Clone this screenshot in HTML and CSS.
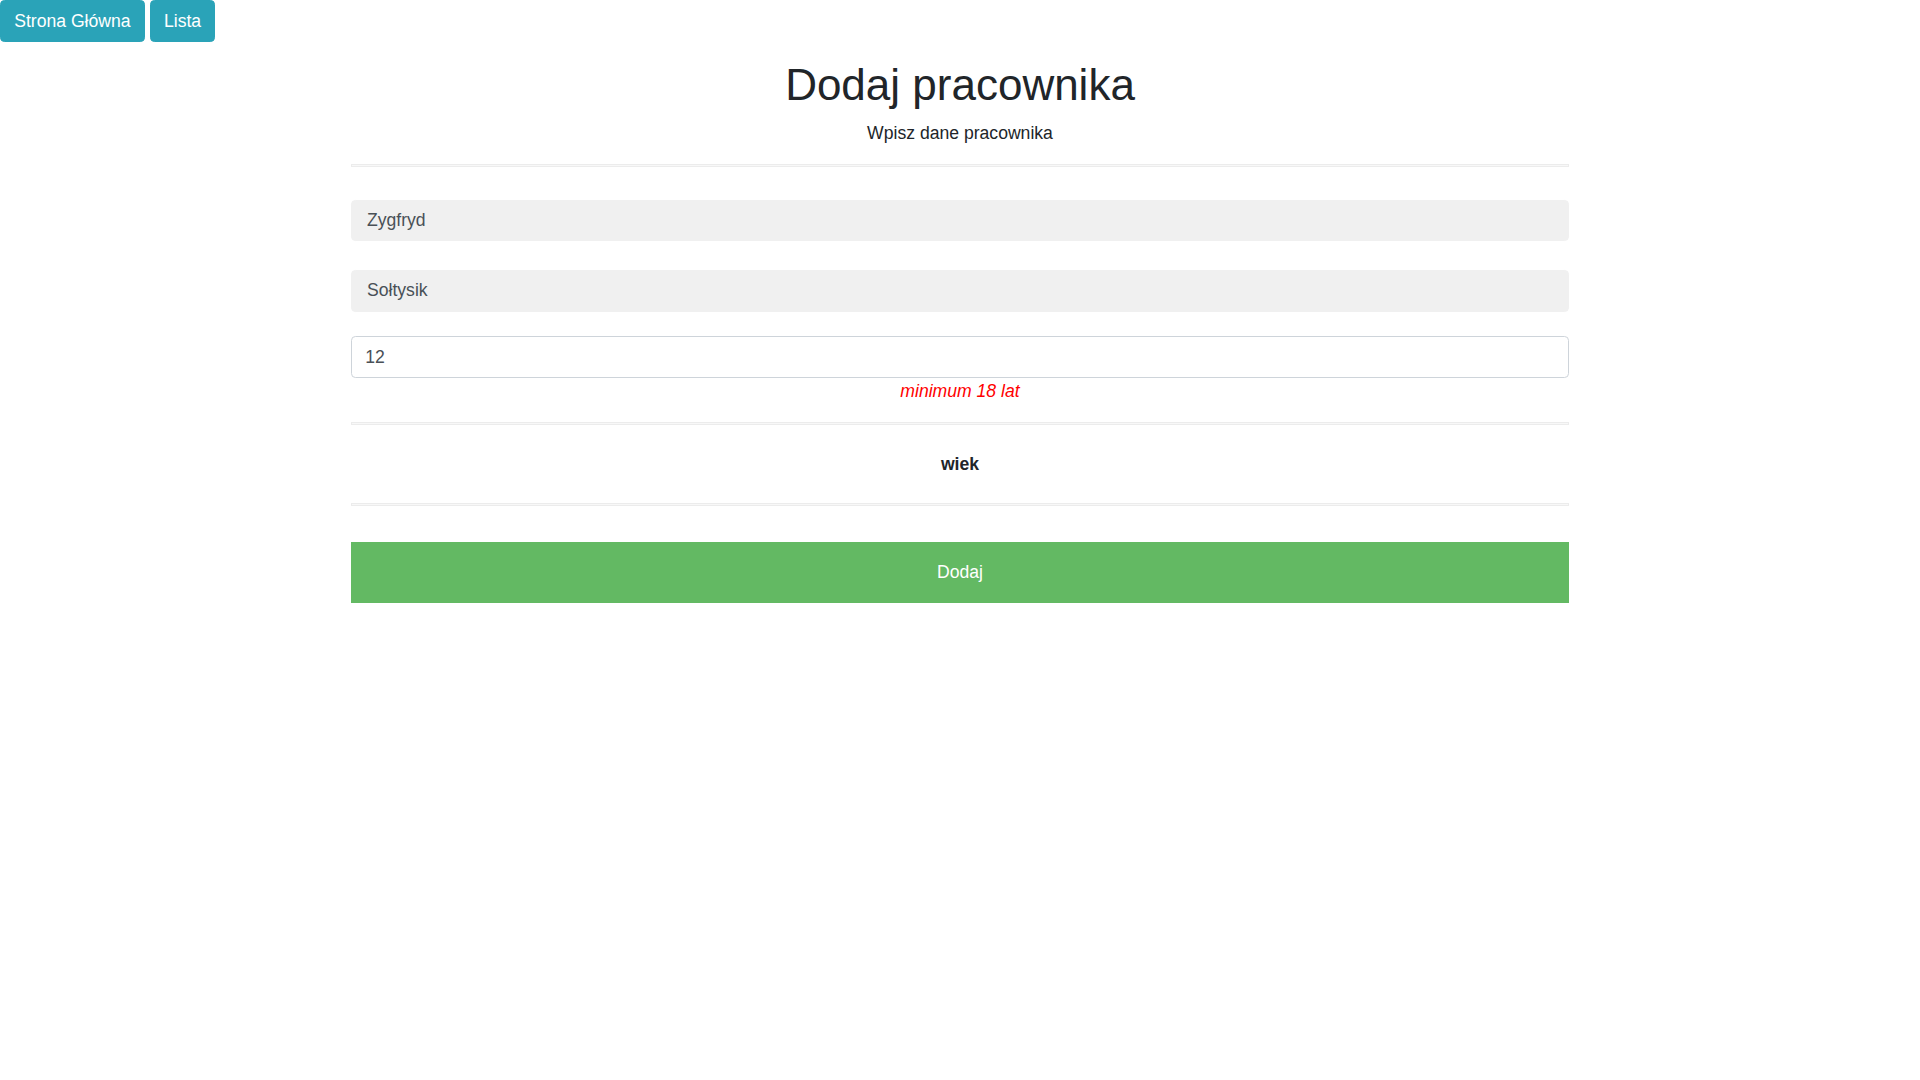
FILE: index.html
```html
<!DOCTYPE html>
<html lang="pl">
<head>
<meta charset="utf-8">
<title>Dodaj pracownika</title>
<link rel="stylesheet" href="styles.css">
</head>
<body>
<nav class="topnav">
  <a class="navbtn" href="#">Strona Główna</a>
  <a class="navbtn" href="#">Lista</a>
</nav>
<main class="container">
  <h1 class="title">Dodaj pracownika</h1>
  <p class="subtitle">Wpisz dane pracownika</p>
  <hr class="rule rule-top">
  <form class="form">
    <input class="field field-ro first" type="text" value="Zygfryd" readonly>
    <input class="field field-ro second" type="text" value="Sołtysik" readonly>
    <input class="field field-edit third" type="text" value="12">
    <div class="error">minimum 18 lat</div>
    <hr class="rule rule-mid">
    <div class="label">wiek</div>
    <hr class="rule rule-bottom">
    <button class="submit" type="button">Dodaj</button>
  </form>
</main>
</body>
</html>
```
FILE: styles.css
```css
html, body {
  margin: 0;
  padding: 0;
  background: #fff;
}
body {
  font-family: "Liberation Sans", Arial, sans-serif;
  font-size: 17.6px;
  line-height: 1.5;
  color: #212529;
}
.topnav {
  display: flex;
  gap: 5px;
  height: 41.6px;
}
.navbtn {
  display: inline-block;
  background: #2aa3b8;
  color: #fff;
  text-decoration: none;
  border: 1.1px solid #2aa3b8;
  border-radius: 4.4px;
  padding: 6.6px 13.2px;
  font-size: 17.6px;
  line-height: 26.4px;
}
.container {
  width: 1218px;
  margin: 0 auto;
  text-align: center;
}
.title {
  font-size: 44px;
  font-weight: 400;
  line-height: 1.2;
  margin: 17.5px 0 8.3px;
}
.subtitle {
  margin: 0 0 17px;
}
.rule {
  display: block;
  height: 1px;
  margin: 0;
  border: 1px solid #ececec;
  background: #f8f8f8;
}
.rule-top {
  margin-bottom: 33px;
}
.form {
  display: flex;
  flex-direction: column;
  margin: 0;
}
.field {
  box-sizing: border-box;
  display: block;
  width: 100%;
  height: 41.8px;
  padding: 6.6px 13.2px;
  font-family: "Liberation Sans", Arial, sans-serif;
  font-size: 17.6px;
  line-height: 26.4px;
  color: #495057;
  border-radius: 4.4px;
  margin: 0;
  outline: none;
}
.field-ro {
  background: #f0f0f0;
  border: 1.1px solid #f0f0f0;
  padding-left: 15px;
  padding-top: 5.8px;
}
.field-edit {
  background: #fff;
  border: 1.1px solid #ced4da;
}
.second {
  margin-top: 29px;
}
.third {
  margin-top: 24px;
}
.error {
  color: #ff0000;
  font-style: italic;
  line-height: 26.4px;
  margin-top: 0.5px;
  margin-bottom: 17px;
}
.label {
  font-weight: 700;
  line-height: 26.4px;
  margin: 26px 0 26px;
}
.rule-bottom {
  margin-bottom: 36px;
}
.submit {
  display: block;
  width: 100%;
  height: 61px;
  border: none;
  border-radius: 0;
  background: #63b963;
  color: #fff;
  font-family: "Liberation Sans", Arial, sans-serif;
  font-size: 17.6px;
  padding: 0;
  cursor: pointer;
}
```
